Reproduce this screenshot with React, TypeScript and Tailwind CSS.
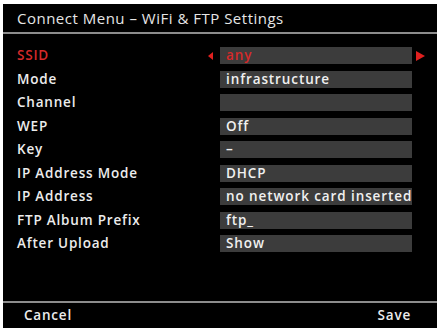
import React from "react";

const rows: { label: string; value: string; active?: boolean }[] = [
  { label: "SSID", value: "any", active: true },
  { label: "Mode", value: "infrastructure" },
  { label: "Channel", value: "" },
  { label: "WEP", value: "Off" },
  { label: "Key", value: "–" },
  { label: "IP Address Mode", value: "DHCP" },
  { label: "IP Address", value: "no network card inserted" },
  { label: "FTP Album Prefix", value: "ftp_" },
  { label: "After Upload", value: "Show" },
];

export default function App() {
  return (
    <div
      className="w-[437px] h-[328px] bg-white pt-[4px] pl-[3px] overflow-hidden"
      style={{ fontFamily: '"Open Sans", "DejaVu Sans", sans-serif' }}
    >
      <div className="w-full h-full bg-black flex flex-col">
        <div className="h-[28px] flex items-center pl-[14px] text-[15px] text-[#e6e6e6] font-medium tracking-[0.5px]">
          Connect Menu – WiFi &amp; FTP Settings
        </div>
        <div className="h-[2px] bg-[#8c8c8c]" />
        <div className="flex flex-col gap-[6.5px] pt-[13px]">
          {rows.map((r) => (
            <div key={r.label} className="flex items-center h-[17px]">
              <div
                className={`w-[204px] pl-[14px] text-[13.5px] tracking-[0.8px] font-semibold ${
                  r.active ? "text-[#d42a2a]" : "text-[#ececec]"
                }`}
              >
                {r.label}
              </div>
              <div className="w-[13px] flex items-center justify-start">
                {r.active && (
                  <svg width="5" height="8" viewBox="0 0 5 8" className="ml-[1px]">
                    <polygon points="5,0 5,8 0,4" fill="#e0201f" />
                  </svg>
                )}
              </div>
              <div
                className={`w-[192px] h-[17px] bg-[#3c3c3c] flex items-center pl-[6px] text-[13.5px] tracking-[0.9px] font-semibold whitespace-nowrap overflow-hidden ${
                  r.active ? "text-[#d42a2a]" : "text-[#f0f0f0]"
                }`}
              >
                {r.value}
              </div>
              <div className="flex items-center pl-[4px]">
                {r.active && (
                  <svg width="9" height="10" viewBox="0 0 9 10">
                    <polygon points="0,0 9,5 0,10" fill="#e0201f" />
                  </svg>
                )}
              </div>
            </div>
          ))}
        </div>
        <div className="flex-1" />
        <div className="h-[2px] bg-[#8c8c8c]" />
        <div className="h-[25px] flex items-center justify-between pl-[21px] pr-[26px] text-[13.5px] tracking-[0.8px] font-semibold text-[#ececec]">
          <span>Cancel</span>
          <span>Save</span>
        </div>
      </div>
    </div>
  );
}
